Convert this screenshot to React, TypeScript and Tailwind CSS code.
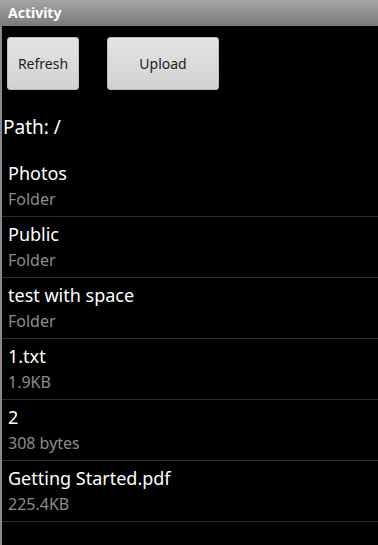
import React from 'react';

const items = [
  { name: 'Photos', info: 'Folder' },
  { name: 'Public', info: 'Folder' },
  { name: 'test with space', info: 'Folder' },
  { name: '1.txt', info: '1.9KB' },
  { name: '2', info: '308 bytes' },
  { name: 'Getting Started.pdf', info: '225.4KB' },
];

export default function App() {
  return (
    <div
      className="w-[378px] h-[545px] bg-black overflow-hidden flex flex-col"
      style={{ fontFamily: '"Noto Sans", "Open Sans", sans-serif' }}
    >
      <div className="h-[26px] shrink-0 bg-gradient-to-b from-[#a6a6a6] to-[#7a7a7a] flex items-center pl-[8px]">
        <span className="text-[14px] font-bold text-white leading-none">Activity</span>
      </div>

      <div className="flex-1 border-l-2 border-[#8a8a8a] flex flex-col">
        <div className="flex gap-[28px] pl-[5px] pt-[11px]">
          <button className="w-[72px] h-[53px] rounded-[3px] bg-gradient-to-b from-[#e4e4e4] to-[#d2d2d2] border border-[#bdbdbd] text-[14px] text-[#1e1e1e]">
            Refresh
          </button>
          <button className="w-[112px] h-[53px] rounded-[3px] bg-gradient-to-b from-[#e4e4e4] to-[#d2d2d2] border border-[#bdbdbd] text-[14px] text-[#1e1e1e]">
            Upload
          </button>
        </div>

        <div className="pl-[1px] pt-[24px] text-[19px] leading-[26px] text-white">Path: /</div>

        <ul className="mt-[16px]">
          {items.map((it) => (
            <li key={it.name} className="h-[61px] border-b border-[#2e2e2e] pl-[6px] pt-[5px]">
              <div className="text-[18px] leading-[24px] text-white">{it.name}</div>
              <div className="text-[16px] leading-[28px] text-[#8c8c8c]">{it.info}</div>
            </li>
          ))}
        </ul>
      </div>
    </div>
  );
}
